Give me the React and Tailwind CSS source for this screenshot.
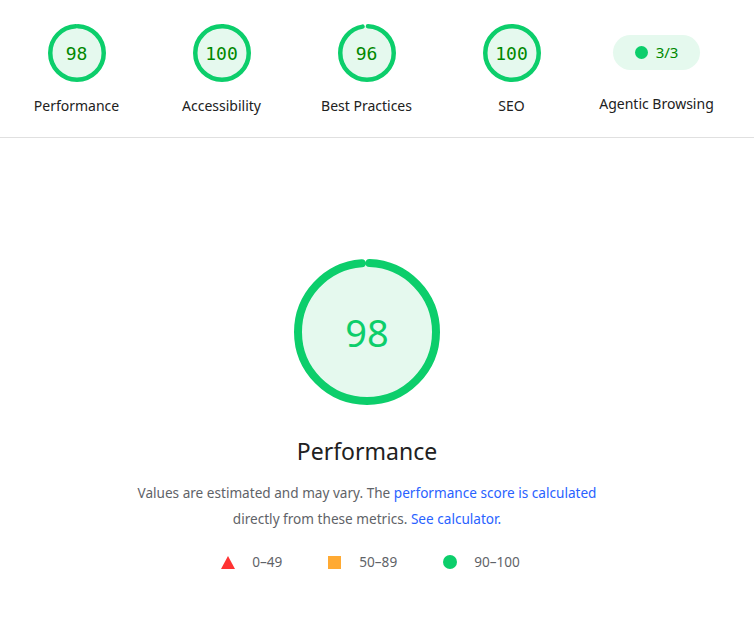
import React from 'react';

const GREEN = '#0cce6b';

function Gauge({ score, size, stroke, className, textClass }) {
  const r = (size - stroke) / 2;
  const circ = 2 * Math.PI * r;
  const len = (score / 100) * circ;
  return (
    <div className={`relative flex items-center justify-center ${className}`}>
      <svg width={size} height={size} viewBox={`0 0 ${size} ${size}`} className="absolute inset-0 -rotate-90">
        <circle cx={size / 2} cy={size / 2} r={r} fill="#e5f9ee" />
        <circle
          cx={size / 2}
          cy={size / 2}
          r={r}
          fill="none"
          stroke={GREEN}
          strokeWidth={stroke}
          strokeLinecap="round"
          strokeDasharray={`${len} ${circ}`}
          strokeDashoffset={-circ * 0.006}
        />
      </svg>
      <span className={`relative ${textClass}`}>{score}</span>
    </div>
  );
}

function Summary({ score, label }) {
  return (
    <div className="flex w-[145px] flex-col items-center">
      <Gauge
        score={score}
        size={58}
        stroke={4.5}
        className="h-[58px] w-[58px]"
        textClass="font-['DejaVu_Sans_Mono',monospace] text-[18px] text-[#008800]"
      />
      <div className="mt-[13px] text-[14px] text-[#212121]">{label}</div>
    </div>
  );
}

export default function App() {
  return (
    <div className="h-[628px] w-[754px] bg-white font-['Noto_Sans',sans-serif]">
      <div className="flex h-[138px] border-b border-[#e0e0e0] pl-[4px] pt-[24px]">
        <Summary score={98} label="Performance" />
        <Summary score={100} label="Accessibility" />
        <Summary score={96} label="Best Practices" />
        <Summary score={100} label="SEO" />
        <div className="flex w-[145px] flex-col items-center">
          <div className="mt-[11px] flex h-[35px] w-[87px] items-center justify-center gap-[8px] rounded-full bg-[#e5f9ee]">
            <span className="h-[13px] w-[13px] rounded-full bg-[#0cce6b]" />
            <span className="text-[15px] text-[#008800]">3/3</span>
          </div>
          <div className="mt-[23px] text-[14px] text-[#212121]">Agentic Browsing</div>
        </div>
      </div>

      <div className="flex w-[734px] flex-col items-center pt-[121px]">
        <Gauge
          score={98}
          size={146}
          stroke={8}
          className="h-[146px] w-[146px]"
          textClass="text-[38px] text-[#0cce6b]"
        />
        <div className="mt-[30px] text-[23px] leading-[32px] text-[#212121]">Performance</div>
        <p className="mt-[13px] w-[470px] text-center text-[13.6px] leading-[26px] text-[#5f6368]">
          Values are estimated and may vary. The{' '}
          <span className="text-[#2962ff]">performance score is calculated</span> directly from these metrics.{' '}
          <span className="text-[#2962ff]">See calculator.</span>
        </p>
        <div className="mt-[20px] flex items-center pl-[7px] text-[13.6px] text-[#5f6368]">
          <svg width="14" height="13" viewBox="0 0 14 13">
            <polygon points="7,0 14,13 0,13" fill="#ff3333" />
          </svg>
          <span className="ml-[17px]">0–49</span>
          <span className="ml-[46px] h-[13px] w-[13px] bg-[#ffaa33]" />
          <span className="ml-[18px]">50–89</span>
          <span className="ml-[46px] h-[14px] w-[14px] rounded-full bg-[#0cce6b]" />
          <span className="ml-[17px]">90–100</span>
        </div>
      </div>
    </div>
  );
}
